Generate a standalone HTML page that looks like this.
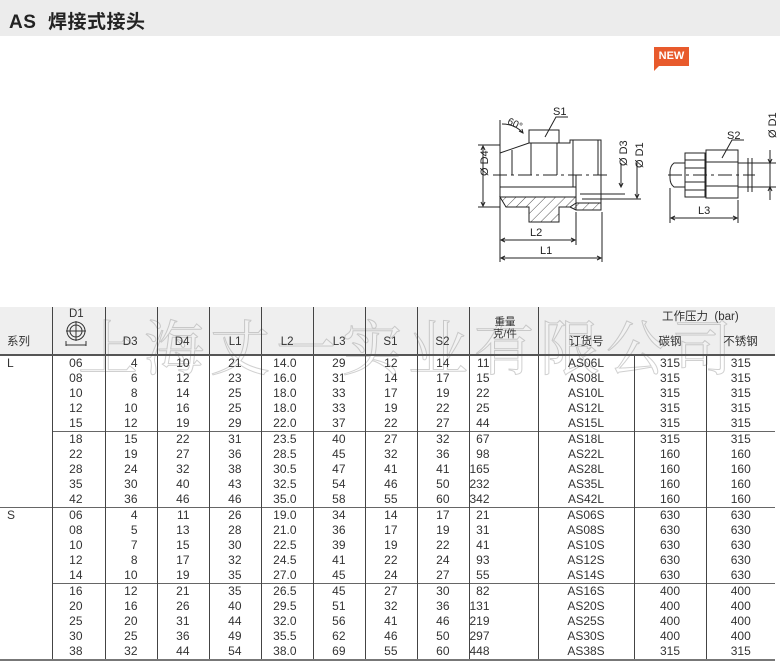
<!DOCTYPE html>
<html><head><meta charset="utf-8">
<style>
*{margin:0;padding:0;box-sizing:border-box}
body{width:780px;height:670px;background:#fff;position:relative;overflow:hidden;font-family:"Liberation Sans","Noto Sans CJK SC",sans-serif;color:#333}
#bar{position:absolute;left:0;top:0;width:780px;height:36px;background:#ececec}
#bar span{position:absolute;left:9px;top:7px;font-size:19px;font-weight:bold;color:#222;letter-spacing:0.5px}
#new{position:absolute;left:654px;top:47px;width:35px;height:19px;background:#e85a2c;color:#fff;font-size:11px;font-weight:bold;text-align:center;line-height:19px}
#new:after{content:"";position:absolute;left:0;top:19px;border-top:5px solid #e85a2c;border-right:5px solid transparent}
#hdr{position:absolute;left:0;top:307px;width:775px;height:48px;background:#efefef}
table{position:absolute;left:0;top:307px;width:775px;border-collapse:collapse;table-layout:fixed;font-size:12px}
td{height:15px;line-height:15px;padding:0;white-space:nowrap;border-left:1px solid #444;text-align:right;overflow:visible}
td:first-child{border-left:none;text-align:left;padding-left:7px}
tr.h td{height:48px;vertical-align:bottom;padding-bottom:4px;font-size:11.5px;border-bottom:2px solid #555}
tr.g td{border-top:1px solid #666}
tr.g td:first-child{border-top:none}
tr.gs td{border-top:1px solid #666}
tr.last td{border-bottom:2px solid #777}
.c1{padding-right:22px}.cn{padding-right:19px}
td.cw{text-align:left;padding-left:0}
td.cw span{display:inline-block;width:20px;margin-left:0;text-align:right}
.co{text-align:center!important}
#wm{position:absolute;left:78px;top:302px;font-size:60px;letter-spacing:6px;color:rgba(255,255,255,0.2);-webkit-text-stroke:1px rgba(150,150,150,0.45);font-family:"Noto Serif CJK SC",serif;white-space:nowrap}
</style></head><body>
<div id="bar"><span>AS&nbsp; 焊接式接头</span></div>
<div id="new">NEW</div>

<svg style="position:absolute;left:0;top:0" width="780" height="300" viewBox="0 0 780 300" fill="none" stroke="#222" stroke-width="1">
<defs><pattern id="h" width="7" height="7" patternUnits="userSpaceOnUse" patternTransform="rotate(45)"><line x1="0" y1="0" x2="0" y2="7" stroke="#222" stroke-width="0.8"/></pattern></defs>
<path d="M500,153 L529,143 L529,130 L559,130 L559,143 L570,143 L570,140 L601,140 L601,210"/>
<path d="M500,153 L500,197"/>
<line x1="529" y1="143" x2="559" y2="143"/>
<line x1="512" y1="150" x2="512" y2="175"/>
<line x1="531" y1="143" x2="531" y2="175"/>
<line x1="557" y1="143" x2="557" y2="175"/>
<line x1="573" y1="140" x2="573" y2="187"/>
<line x1="598" y1="140" x2="598" y2="175"/>
<line x1="493" y1="175" x2="610" y2="175" stroke-dasharray="14,4,3,4"/>
<line x1="500" y1="187" x2="576" y2="187"/>
<line x1="576" y1="175" x2="576" y2="210"/>
<path d="M500,197 L506,207 L529,207 L529,222 L559,222 L559,207 L570,207 L576,203 L576,197 Z" fill="url(#h)"/>
<path d="M570,207 L576,210 L601,210 L601,203 L576,203" fill="url(#h)"/>
<line x1="580" y1="194" x2="625" y2="194"/>
<line x1="582" y1="199" x2="641" y2="199"/>
<line x1="478" y1="145" x2="500" y2="145"/><line x1="478" y1="207" x2="500" y2="207"/>
<line x1="483" y1="146" x2="483" y2="206"/>
<path d="M481,150 L483,146 L485,150 M481,202 L483,206 L485,202"/>
<line x1="500" y1="120" x2="500" y2="262"/>
<line x1="602" y1="212" x2="602" y2="262"/>
<line x1="576" y1="212" x2="576" y2="245"/>
<line x1="501" y1="240" x2="575" y2="240"/><path d="M505,238 L501,240 L505,242 M571,238 L575,240 L571,242"/>
<line x1="501" y1="258" x2="601" y2="258"/><path d="M505,256 L501,258 L505,260 M597,256 L601,258 L597,260"/>
<line x1="621" y1="163" x2="621" y2="187"/><path d="M619,183 L621,187 L623,183"/>
<line x1="637" y1="163" x2="637" y2="198"/><path d="M635,194 L637,198 L639,194"/>
<path d="M545,137 L556,117 L568,117"/>
<path d="M502,124 Q515,124 523,133"/><path d="M519,131 L523,133 L522,129"/>
<path d="M685,163 L674,163 Q670,166 670,172 L670,178 Q670,184 674,187 L685,187"/>
<rect x="685" y="153" width="20" height="44"/>
<line x1="685" y1="160" x2="705" y2="160"/><line x1="685" y1="190" x2="705" y2="190"/>
<line x1="685" y1="168" x2="705" y2="168"/><line x1="685" y1="182" x2="705" y2="182"/>
<rect x="706" y="150" width="32" height="48"/>
<line x1="706" y1="162" x2="738" y2="162"/><line x1="706" y1="186" x2="738" y2="186"/>
<line x1="738" y1="163" x2="776" y2="163"/><line x1="738" y1="187" x2="776" y2="187"/>
<line x1="748" y1="158" x2="748" y2="192"/><line x1="752" y1="158" x2="752" y2="192"/>
<line x1="668" y1="175" x2="755" y2="175" stroke-dasharray="14,4,3,4"/>
<line x1="770" y1="150" x2="770" y2="200"/><path d="M768,159 L770,163 L772,159 M768,191 L770,187 L772,191"/>
<line x1="670" y1="188" x2="670" y2="223"/><line x1="738" y1="200" x2="738" y2="223"/>
<line x1="671" y1="218" x2="737" y2="218"/><path d="M675,216 L671,218 L675,220 M733,216 L737,218 L733,220"/>
<path d="M722,158 L732,140 L744,140"/>
<g fill="#222" stroke="none" font-family="Liberation Sans,sans-serif" font-size="11">
<text x="553" y="115">S1</text>
<text x="508" y="126" font-size="10" transform="rotate(25 513 122)">60°</text>
<text x="530" y="236">L2</text>
<text x="540" y="254">L1</text>
<text x="478" y="186" transform="rotate(-90 478 176)">Ø D4</text>
<text x="617" y="176" transform="rotate(-90 617 166)">Ø D3</text>
<text x="633" y="178" transform="rotate(-90 633 168)">Ø D1</text>
<text x="727" y="139">S2</text>
<text x="698" y="214">L3</text>
<text x="766" y="148" transform="rotate(-90 766 138)">Ø D1</text>
</g>
</svg>

<div id="hdr"></div>
<div id="wm">上海丈一实业有限公司</div>
<div style="position:absolute;left:662px;top:308px;font-size:11.5px">工作压力&nbsp; (bar)</div>
<div style="position:absolute;left:493px;top:316px;font-size:10.5px;line-height:12px;text-align:center">重量<br>克/件</div>
<svg style="position:absolute;left:64px;top:321px" width="26" height="26" viewBox="0 0 26 26" fill="none" stroke="#333" stroke-width="1"><circle cx="12" cy="10" r="9"/><circle cx="12" cy="10" r="6"/><line x1="12" y1="0" x2="12" y2="20"/><line x1="2" y1="10" x2="22" y2="10"/><line x1="2" y1="20" x2="2" y2="25"/><line x1="22" y1="20" x2="22" y2="25"/><line x1="2" y1="24" x2="22" y2="24"/></svg>
<div style="position:absolute;left:69px;top:308px;font-size:11.5px">D1</div>

<table>
<colgroup><col style="width:52px"><col style="width:53px"><col style="width:52px"><col style="width:52px"><col style="width:52px"><col style="width:52px"><col style="width:52px"><col style="width:52px"><col style="width:52px"><col style="width:69px"><col style="width:96px"><col style="width:72px"><col style="width:69px"></colgroup>
<tr class="h"><td>系列</td><td></td><td class="cn">D3</td><td class="cn">D4</td><td class="cn">L1</td><td class="cn">L2</td><td class="cn">L3</td><td class="cn">S1</td><td class="cn">S2</td><td></td><td class="co">订货号</td><td class="co" style="border-left:none">碳钢</td><td class="co" style="border-left:none">不锈钢</td></tr>
<tr><td>L</td><td class="c1">06</td><td class="cn">4</td><td class="cn">10</td><td class="cn">21</td><td class="cn" style="padding-right:16px">14.0</td><td class="cn">29</td><td class="cn">12</td><td class="cn">14</td><td class="cw"><span>11</span></td><td class="co">AS06L</td><td class="co">315</td><td class="co">315</td></tr>
<tr><td></td><td class="c1">08</td><td class="cn">6</td><td class="cn">12</td><td class="cn">23</td><td class="cn" style="padding-right:16px">16.0</td><td class="cn">31</td><td class="cn">14</td><td class="cn">17</td><td class="cw"><span>15</span></td><td class="co">AS08L</td><td class="co">315</td><td class="co">315</td></tr>
<tr><td></td><td class="c1">10</td><td class="cn">8</td><td class="cn">14</td><td class="cn">25</td><td class="cn" style="padding-right:16px">18.0</td><td class="cn">33</td><td class="cn">17</td><td class="cn">19</td><td class="cw"><span>22</span></td><td class="co">AS10L</td><td class="co">315</td><td class="co">315</td></tr>
<tr><td></td><td class="c1">12</td><td class="cn">10</td><td class="cn">16</td><td class="cn">25</td><td class="cn" style="padding-right:16px">18.0</td><td class="cn">33</td><td class="cn">19</td><td class="cn">22</td><td class="cw"><span>25</span></td><td class="co">AS12L</td><td class="co">315</td><td class="co">315</td></tr>
<tr><td></td><td class="c1">15</td><td class="cn">12</td><td class="cn">19</td><td class="cn">29</td><td class="cn" style="padding-right:16px">22.0</td><td class="cn">37</td><td class="cn">22</td><td class="cn">27</td><td class="cw"><span>44</span></td><td class="co">AS15L</td><td class="co">315</td><td class="co">315</td></tr>
<tr class="g"><td></td><td class="c1">18</td><td class="cn">15</td><td class="cn">22</td><td class="cn">31</td><td class="cn" style="padding-right:16px">23.5</td><td class="cn">40</td><td class="cn">27</td><td class="cn">32</td><td class="cw"><span>67</span></td><td class="co">AS18L</td><td class="co">315</td><td class="co">315</td></tr>
<tr><td></td><td class="c1">22</td><td class="cn">19</td><td class="cn">27</td><td class="cn">36</td><td class="cn" style="padding-right:16px">28.5</td><td class="cn">45</td><td class="cn">32</td><td class="cn">36</td><td class="cw"><span>98</span></td><td class="co">AS22L</td><td class="co">160</td><td class="co">160</td></tr>
<tr><td></td><td class="c1">28</td><td class="cn">24</td><td class="cn">32</td><td class="cn">38</td><td class="cn" style="padding-right:16px">30.5</td><td class="cn">47</td><td class="cn">41</td><td class="cn">41</td><td class="cw"><span>165</span></td><td class="co">AS28L</td><td class="co">160</td><td class="co">160</td></tr>
<tr><td></td><td class="c1">35</td><td class="cn">30</td><td class="cn">40</td><td class="cn">43</td><td class="cn" style="padding-right:16px">32.5</td><td class="cn">54</td><td class="cn">46</td><td class="cn">50</td><td class="cw"><span>232</span></td><td class="co">AS35L</td><td class="co">160</td><td class="co">160</td></tr>
<tr><td></td><td class="c1">42</td><td class="cn">36</td><td class="cn">46</td><td class="cn">46</td><td class="cn" style="padding-right:16px">35.0</td><td class="cn">58</td><td class="cn">55</td><td class="cn">60</td><td class="cw"><span>342</span></td><td class="co">AS42L</td><td class="co">160</td><td class="co">160</td></tr>
<tr class="gs"><td>S</td><td class="c1">06</td><td class="cn">4</td><td class="cn">11</td><td class="cn">26</td><td class="cn" style="padding-right:16px">19.0</td><td class="cn">34</td><td class="cn">14</td><td class="cn">17</td><td class="cw"><span>21</span></td><td class="co">AS06S</td><td class="co">630</td><td class="co">630</td></tr>
<tr><td></td><td class="c1">08</td><td class="cn">5</td><td class="cn">13</td><td class="cn">28</td><td class="cn" style="padding-right:16px">21.0</td><td class="cn">36</td><td class="cn">17</td><td class="cn">19</td><td class="cw"><span>31</span></td><td class="co">AS08S</td><td class="co">630</td><td class="co">630</td></tr>
<tr><td></td><td class="c1">10</td><td class="cn">7</td><td class="cn">15</td><td class="cn">30</td><td class="cn" style="padding-right:16px">22.5</td><td class="cn">39</td><td class="cn">19</td><td class="cn">22</td><td class="cw"><span>41</span></td><td class="co">AS10S</td><td class="co">630</td><td class="co">630</td></tr>
<tr><td></td><td class="c1">12</td><td class="cn">8</td><td class="cn">17</td><td class="cn">32</td><td class="cn" style="padding-right:16px">24.5</td><td class="cn">41</td><td class="cn">22</td><td class="cn">24</td><td class="cw"><span>93</span></td><td class="co">AS12S</td><td class="co">630</td><td class="co">630</td></tr>
<tr><td></td><td class="c1">14</td><td class="cn">10</td><td class="cn">19</td><td class="cn">35</td><td class="cn" style="padding-right:16px">27.0</td><td class="cn">45</td><td class="cn">24</td><td class="cn">27</td><td class="cw"><span>55</span></td><td class="co">AS14S</td><td class="co">630</td><td class="co">630</td></tr>
<tr class="g"><td></td><td class="c1">16</td><td class="cn">12</td><td class="cn">21</td><td class="cn">35</td><td class="cn" style="padding-right:16px">26.5</td><td class="cn">45</td><td class="cn">27</td><td class="cn">30</td><td class="cw"><span>82</span></td><td class="co">AS16S</td><td class="co">400</td><td class="co">400</td></tr>
<tr><td></td><td class="c1">20</td><td class="cn">16</td><td class="cn">26</td><td class="cn">40</td><td class="cn" style="padding-right:16px">29.5</td><td class="cn">51</td><td class="cn">32</td><td class="cn">36</td><td class="cw"><span>131</span></td><td class="co">AS20S</td><td class="co">400</td><td class="co">400</td></tr>
<tr><td></td><td class="c1">25</td><td class="cn">20</td><td class="cn">31</td><td class="cn">44</td><td class="cn" style="padding-right:16px">32.0</td><td class="cn">56</td><td class="cn">41</td><td class="cn">46</td><td class="cw"><span>219</span></td><td class="co">AS25S</td><td class="co">400</td><td class="co">400</td></tr>
<tr><td></td><td class="c1">30</td><td class="cn">25</td><td class="cn">36</td><td class="cn">49</td><td class="cn" style="padding-right:16px">35.5</td><td class="cn">62</td><td class="cn">46</td><td class="cn">50</td><td class="cw"><span>297</span></td><td class="co">AS30S</td><td class="co">400</td><td class="co">400</td></tr>
<tr class="last"><td></td><td class="c1">38</td><td class="cn">32</td><td class="cn">44</td><td class="cn">54</td><td class="cn" style="padding-right:16px">38.0</td><td class="cn">69</td><td class="cn">55</td><td class="cn">60</td><td class="cw"><span>448</span></td><td class="co">AS38S</td><td class="co">315</td><td class="co">315</td></tr>
</table>
</body></html>
